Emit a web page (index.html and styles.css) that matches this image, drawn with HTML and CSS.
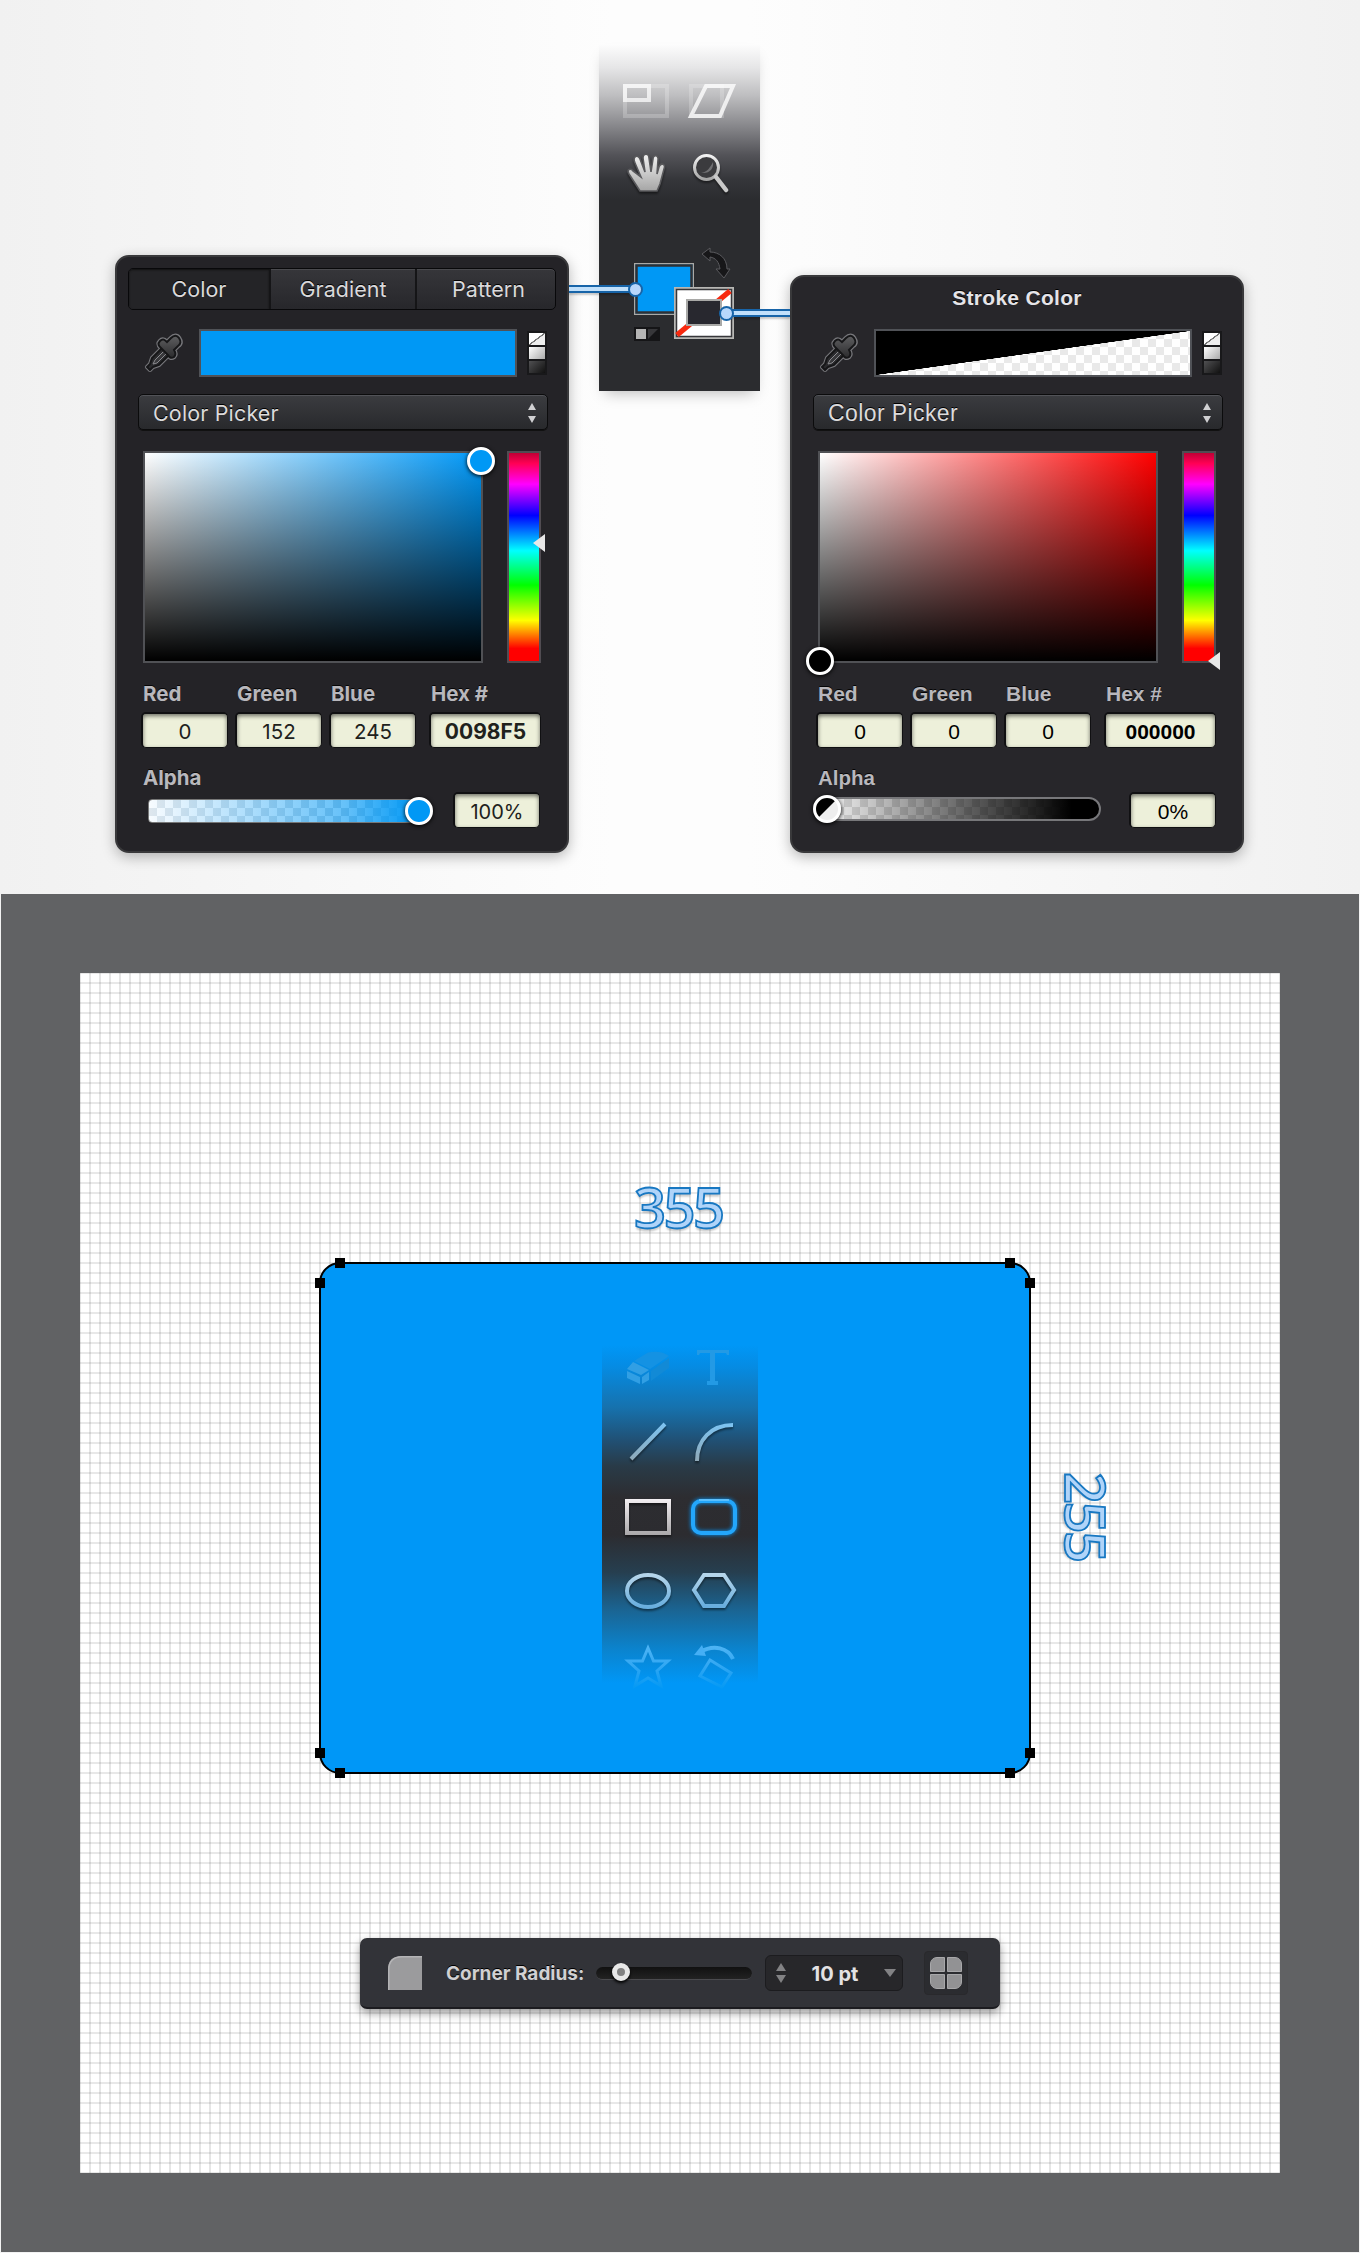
FILE: index.html
```html
<!DOCTYPE html>
<html lang="en">
<head>
<meta charset="utf-8">
<title>Rounded Rectangle Tool</title>
<link rel="stylesheet" href="styles.css">
</head>
<body>
<svg class="defs" width="0" height="0" aria-hidden="true">
  <defs>
    <linearGradient id="silver" x1="0" y1="0" x2="0" y2="1"><stop offset="0" stop-color="#f2f2f2"/><stop offset="1" stop-color="#a5a5a5"/></linearGradient>
    <linearGradient id="dropper" x1="0" y1="0" x2="0" y2="1"><stop offset="0" stop-color="#5f5f61"/><stop offset="1" stop-color="#2b2b2d"/></linearGradient>
    <symbol id="eyedropper" viewBox="0 0 40 40">
      <g fill="none" stroke="#77777b" stroke-linejoin="round" stroke-linecap="round">
        <path d="M21 14 9 26 7 32 4 35 7 38 10 35 16 33 28 21" stroke-width="4"/>
        <path d="M17 9c3-3 5-1 7 1l4-4c3-3 6-3 8 0s2 6-1 8l-4 4c2 3 2 5 0 7-3 2-5 0-6-2l-7-7c-2-2-4-4-1-7z" stroke-width="4.500"/>
      </g>
      <path d="M21 14 9 26 7 32 4 35 7 38 10 35 16 33 28 21z" fill="#2a2a2d" stroke="#161618" stroke-width="2"/>
      <path d="M22 18 12 28 10 32 14 31 24 21" fill="#39393c" stroke="#8a8a8e" stroke-width="1"/>
      <path d="M17 9c3-3 5-1 7 1l4-4c3-3 6-3 8 0s2 6-1 8l-4 4c2 3 2 5 0 7-3 2-5 0-6-2l-7-7c-2-2-4-4-1-7z" fill="url(#dropper)" stroke="#161618" stroke-width="2"/>
    </symbol>
  </defs>
</svg>

<section class="stage">
  <article class="panel fill-panel">
    <nav class="tabs"><span class="tab active">Color</span><span class="tab">Gradient</span><span class="tab">Pattern</span></nav>
    <div class="swatch-row">
      <svg class="eyedropper"><use href="#eyedropper"/></svg>
      <div class="swatch blue"></div>
      <div class="mini"><i class="none"></i><i class="light"></i><i class="dark"></i></div>
    </div>
    <div class="select">Color Picker <svg width="8" height="20" viewBox="0 0 8 20"><path d="M0 7 4 0 8 7zM0 13 4 20 8 13z" fill="#d0d0d2"/></svg></div>
    <div class="picker-row">
      <div class="field-map blue-map"><span class="knob map-knob"></span></div>
      <div class="hue"><svg class="pointer" width="12" height="18" viewBox="0 0 12 18"><path d="M0 9 12 0V18z" fill="#e8e8e8"/></svg></div>
    </div>
    <div class="values">
      <label>Red<span class="value">0</span></label>
      <label>Green<span class="value">152</span></label>
      <label>Blue<span class="value">245</span></label>
      <label class="hex">Hex #<span class="value">0098F5</span></label>
    </div>
    <div class="alpha-label">Alpha</div>
    <div class="alpha-row">
      <div class="alpha blue-alpha"><span class="knob alpha-knob"></span></div>
      <span class="value percent">100%</span>
    </div>
  </article>

  <div class="toolbar">
    <svg width="161" height="347" viewBox="0 0 161 347">
      <g fill="none" stroke="#fff" stroke-width="4">
        <rect x="26" y="42" width="42" height="30" opacity=".22"/>
        <rect x="26" y="42" width="24" height="14" opacity=".72"/>
        <rect x="92" y="42" width="31" height="30" opacity=".2"/>
        <path d="M107 42H134L121 72H92z" opacity=".78"/>
      </g>
      <g class="shadowed">
        <path d="M41 147 30 130C27 125 32 124 34 127L42 133 36 119C33 112 39 110 41 115L46 128 44 114C44 109 50 109 50 114L52 128 54 115C54 110 60 111 59 116L58 130 60 123C62 118 67 120 65 125L61 140 58 147z" fill="url(#silver)" stroke="#59595c" stroke-width="1.600"/>
        <circle cx="107.500" cy="123.500" r="12" fill="#3b3b3e" stroke="url(#silver)" stroke-width="3"/>
        <path d="M102 129C111 130 115 124 114 118C111 124 108 128 102 129z" fill="#707073"/>
        <path d="M117 133 127 146" stroke="#c9c9c9" stroke-width="4.500" stroke-linecap="round"/>
      </g>
      <path d="M103 210 111 204V208C120 208 128 214 128 225H131L125 234 117 225H121C120 218 117 214 111 213V217z" fill="#171719" stroke="#5a5a5e" stroke-width="1"/>
      <rect x="35.750" y="219.750" width="58.500" height="50.500" fill="#0098f5" stroke="#aaa9a6" stroke-width="1.500"/>
      <rect x="37.500" y="221.500" width="55" height="47" fill="none" stroke="#303033" stroke-width="2.500"/>
      <rect x="76" y="244" width="58" height="50" fill="#fff" stroke="#b7b7b4" stroke-width="2"/>
      <rect x="77.500" y="245.500" width="55" height="47" fill="none" stroke="#37373a" stroke-width="1.500"/>
      <path d="M78 291 131 247" stroke="#f7290f" stroke-width="5.500"/>
      <rect x="88" y="256" width="34" height="25" fill="#28282f" stroke="#a9a9a7" stroke-width="2"/>
      <rect x="35" y="283" width="26" height="14" fill="#151517"/><rect x="37" y="285" width="10" height="10" fill="#b4b4b4"/><path d="M49 295V285H59z" fill="#37373a"/>
    </svg>
  </div>

  <article class="panel stroke-panel">
    <h2>Stroke Color</h2>
    <div class="swatch-row">
      <svg class="eyedropper"><use href="#eyedropper"/></svg>
      <div class="swatch black"></div>
      <div class="mini"><i class="none"></i><i class="light"></i><i class="dark"></i></div>
    </div>
    <div class="select">Color Picker <svg width="8" height="20" viewBox="0 0 8 20"><path d="M0 7 4 0 8 7zM0 13 4 20 8 13z" fill="#d0d0d2"/></svg></div>
    <div class="picker-row">
      <div class="field-map red-map"><span class="knob map-knob"></span></div>
      <div class="hue"><svg class="pointer" width="12" height="18" viewBox="0 0 12 18"><path d="M0 9 12 0V18z" fill="#e8e8e8"/></svg></div>
    </div>
    <div class="values">
      <label>Red<span class="value">0</span></label>
      <label>Green<span class="value">0</span></label>
      <label>Blue<span class="value">0</span></label>
      <label class="hex">Hex #<span class="value">000000</span></label>
    </div>
    <div class="alpha-label">Alpha</div>
    <div class="alpha-row">
      <div class="alpha black-alpha"><span class="knob alpha-knob"></span></div>
      <span class="value percent">0%</span>
    </div>
  </article>
  <span class="wire wire-left"></span>
  <span class="wire wire-right"></span>
</section>

<section class="workspace">
  <div class="canvas">
    <div class="measure width">355</div>
    <div class="measure height">255</div>
    <div class="shape">
      <b class="h h1"></b><b class="h h2"></b><b class="h h3"></b><b class="h h4"></b>
      <b class="h h5"></b><b class="h h6"></b><b class="h h7"></b><b class="h h8"></b>
      <div class="tools">
        <svg width="156" height="345" viewBox="602 1345 156 345">
          <defs>
            <linearGradient id="fadeup" gradientUnits="userSpaceOnUse" x1="0" y1="1422" x2="0" y2="1460"><stop offset="0" stop-color="#7cc5f5"/><stop offset="1" stop-color="#8fa9b8"/></linearGradient>
            <linearGradient id="fadedown" x1="0" y1="0" x2="0" y2="1"><stop offset="0" stop-color="#b5d5ea"/><stop offset="1" stop-color="#68aede"/></linearGradient>
            <linearGradient id="rim" gradientUnits="userSpaceOnUse" x1="0" y1="1499" x2="0" y2="1535"><stop offset="0" stop-color="#f3eff2"/><stop offset="1" stop-color="#aaa8aa"/></linearGradient>
            <linearGradient id="star" gradientUnits="userSpaceOnUse" x1="0" y1="1643" x2="0" y2="1690"><stop offset="0" stop-color="#53b6f5"/><stop offset=".5" stop-color="#30a7f3"/><stop offset="1" stop-color="#0098f5"/></linearGradient>
          </defs>
          <path d="M634 1361 648 1352.500Q661 1350 669 1356L650 1369z" fill="#1492e3"/>
          <path d="M651 1371 669 1358V1368L651 1381z" fill="#128ad6"/>
          <path d="M627 1369 633 1362 649 1370 641 1375zM627 1371 640 1377V1384L627 1378zM642 1377 649 1372V1380L642 1384z" fill="#319fe4"/>
          <path d="M697 1350H729V1355H727L726 1353H715V1381H718V1385H707V1381H710V1353H700L699 1355H697z" fill="#239ae5"/>
          <g class="shadowed" fill="none" stroke-width="4">
            <path d="M631 1459 665 1424M697 1461C697 1440 711 1425 733 1425" stroke="url(#fadeup)"/>
            <rect x="627" y="1501" width="42" height="32" stroke="url(#rim)"/>
            <ellipse cx="648" cy="1591" rx="21" ry="16" stroke="url(#fadedown)"/>
            <path d="M704 1575H724L734 1590 724 1606H704L694 1590z" stroke="url(#fadedown)"/>
          </g>
          <rect class="glow" x="693" y="1501" width="42" height="32" rx="8" fill="none" stroke="#23a6fb" stroke-width="4"/>
          <path d="M699 1500H729" stroke="#6fc9ff" stroke-width="1.500"/>
          <g fill="none" stroke="url(#star)" stroke-width="3">
            <path d="M648 1648 653.500 1661H668L657 1671 661 1686 648 1678 635 1686 639 1671 628 1661H642.500z"/>
            <path d="M710 1660 731 1673 722 1687 700 1676z"/><path d="M700 1652C714 1644 728 1648 733 1659" stroke-width="4"/>
          </g>
          <path d="M694 1655 702 1645 706 1656z" fill="#45aff5"/>
        </svg>
      </div>
    </div>
    <div class="radius-bar">
      <svg class="corner" width="34" height="34" viewBox="0 0 34 34"><path d="M0 34V14Q0 0 14 0H34V34z" fill="#9b9b9d"/><path d="M.75 34V14Q.75 .75 14 .75H34" fill="none" stroke="#b4b4b6" stroke-width="1.500"/></svg>
      <span class="radius-label">Corner Radius:</span>
      <div class="track"><i></i></div>
      <div class="stepper">
        <svg width="10" height="20" viewBox="0 0 10 20"><path d="M0 8 5 0 10 8zM0 12 5 20 10 12z" fill="#828284"/></svg>
        <span>10 pt</span>
        <svg width="12" height="8" viewBox="0 0 12 8"><path d="M0 0H12L6 8z" fill="#828284"/></svg>
      </div>
      <div class="corners"><i></i><i></i><i></i><i></i></div>
    </div>
  </div>
</section>
</body>
</html>
```
FILE: styles.css
```css
*, *::after { box-sizing: border-box; }
body { margin: 0; width: 1360px; background: #f2f2f2; font-family: Inter, "Liberation Sans", sans-serif; }
.defs { position: absolute; }
svg { display: block; flex: none; }

.stage { position: relative; height: 894px; padding: 44px 116px 0 115px; display: flex; justify-content: space-between; align-items: flex-start; background: linear-gradient(90deg, #f1f1f1, #fdfdfd 45%, #fdfdfd 55%, #f1f1f1); }

.panel { width: 454px; padding: 11px 25px 0 26px; background: #242327; border: 2px solid #39393b; border-radius: 14px; box-shadow: 0 4px 14px rgba(0,0,0,.28); color: #b9b8bd; font-size: 20px; }
.fill-panel { height: 598px; margin-top: 211px; }
.stroke-panel { height: 578px; margin-top: 231px; padding: 0 26px; background: #27262a; font-family: "Liberation Sans", Arial, sans-serif; }
.stroke-panel h2 { margin: 0; height: 52px; padding-top: 9px; line-height: 24px; font-size: 21px; color: #e5e4e8; text-align: center; letter-spacing: .3px; text-shadow: 0 -1px #000; }
.tabs { display: flex; width: 428px; height: 42px; margin-left: -15px; border: 1px solid #08080a; border-radius: 5px; background: linear-gradient(#36363a, #27272b); box-shadow: inset 0 1px #4a4a4e; }
.tab { flex: 1; display: flex; align-items: center; justify-content: center; color: #dad9db; font-size: 21.500px; text-shadow: 0 -1px #000; border-left: 2px solid #151517; }
.tab.active { flex: none; width: 140px; border: 0; background: #242427; border-radius: 4px 0 0 4px; box-shadow: inset 0 1px 2px #111; }
.tab:last-child { flex: none; width: 140px; padding-left: 5px; }

.swatch-row { display: flex; align-items: flex-start; height: 65px; padding-left: 1px; }
.fill-panel .swatch-row { margin-top: 19px; }
.eyedropper { width: 40px; height: 40px; margin: 3px 0 0 -1px; }
.swatch { flex: none; width: 318px; height: 48px; margin-left: 16px; border: 2px solid #505257; }
.blue { background: #0098f5; }
.black { background: linear-gradient(to bottom right, #000 49.8%, transparent 50.2%), repeating-conic-gradient(#e9e9e9 0 25%, #fff 0 50%) 0 0 / 16px 16px; }
.mini { flex: none; width: 20px; height: 44px; margin: 2px 0 0 10px; padding: 2px; background: #18181a; display: flex; flex-direction: column; gap: 2px; }
.mini i { display: block; height: 12px; }
.mini .none { background: linear-gradient(to bottom right, #fff 46%, #777 47% 53%, #eee 54%); }
.mini .light { background: linear-gradient(135deg, #fff, #aaa); }
.mini .dark { background: linear-gradient(135deg, #505052, #111); }
.select { display: flex; align-items: center; justify-content: space-between; width: 410px; height: 36px; margin-left: -5px; padding: 2px 11px 0 14px; border: 1px solid #0b0b0c; border-radius: 5px; background: linear-gradient(#3b3c40, #28292c); box-shadow: inset 0 1px #515257, 0 1px #111; color: #dcdbdc; text-shadow: 0 -1px #000; font-size: 23px; letter-spacing: .4px; }
.fill-panel .select { font-size: 21.500px; letter-spacing: .15px; }
.picker-row { display: flex; gap: 24px; height: 212px; margin-top: 21px; }
.field-map { position: relative; width: 340px; height: 212px; border: 2px solid #505155; }
.blue-map { background: linear-gradient(transparent, #000), linear-gradient(90deg, #fff, #0098f8); }
.red-map { background: linear-gradient(transparent, #000), linear-gradient(90deg, #fff, #f00); }
.knob { position: absolute; width: 28px; height: 28px; border: 3px solid #fff; border-radius: 50%; box-shadow: 0 1px 4px #000; }
.blue-map .map-knob { right: -14px; top: -6px; background: #0098f5; }
.red-map .map-knob { left: -14px; bottom: -14px; background: #000; }
.hue { position: relative; width: 34px; border: 2px solid #514c52; background: linear-gradient(#c00035, #ff0055 5%, #f0f 15%, #00f 30%, #0ff 47%, #0f0 63.500%, #ff0 80.500%, red 94%); }
.pointer { position: absolute; right: -6px; top: 81px; }
.stroke-panel .pointer { top: 199px; }
.values { display: flex; height: 85px; gap: 7px; margin: 0 -2px; }
.values label { width: 87px; padding: 19px 0 0 2px; line-height: 24px; font-size: 20.500px; font-weight: 700; color: #b8b7bc; text-shadow: 0 -1px #050506; }
.stroke-panel .values label { font-size: 21px; }
.values .hex { width: 112px; margin-left: 6px; }
.value { display: block; height: 36px; margin: 6px 0 0 -2px; line-height: 36px; text-align: center; font-size: 20.500px; font-weight: 400; color: #20211c; text-shadow: none; background: #edf0da; border: solid #101012; border-width: 2px 1px 1px 2px; border-radius: 5px; box-shadow: inset 0 2px 4px rgba(0,0,0,.55); }
.hex .value { font-weight: 700; font-size: 21px; }
.stroke-panel .value { color: #000; font-size: 21px; }
.alpha-label { height: 45px; padding-top: 18px; line-height: 24px; font-size: 20.500px; font-weight: 700; text-shadow: 0 -1px #050506; }
.alpha-row { display: flex; height: 36px; }
.alpha { position: relative; flex: none; width: 282px; height: 24px; margin: 6px 0 0 5px; border: 1px solid #777; border-radius: 4px 12px 12px 4px; }
.blue-alpha { background: linear-gradient(90deg, rgba(240,248,255,.5), rgba(0,152,245,.6) 70%, #0098f5 96%), repeating-conic-gradient(#ccd5dc 0 25%, #fff 0 50%) 0 0 / 16px 16px; }
.black-alpha { margin: 4px 0 0; width: 283px; border: 2px solid #77777a; border-radius: 12px; background: linear-gradient(90deg, #0000, #0000001c 12%, #0000009c 54%, #000d 78%, #000 90%), repeating-conic-gradient(#d6d6d6 0 25%, #f2f2f2 0 50%) 0 0 / 16px 16px; }
.blue-alpha .alpha-knob { right: -4px; top: -3px; background: #0098f5; }
.black-alpha .alpha-knob { left: -7px; top: -4px; background: linear-gradient(135deg, #000 49%, #eee 51%); }
.percent { flex: none; width: 87px; margin: -1px 0 0 23px; font-size: 20px; }
.stroke-panel .percent { margin-left: 28px; }

.toolbar { width: 161px; height: 347px; background: linear-gradient(#fdfdfd 0, #e5e5e6 7%, #bdbdbf 15%, #858589 24%, #535358 32%, #35363a 39%, #2b2c2f 45%); box-shadow: 0 8px 14px -6px #0004; }
.shadowed { filter: drop-shadow(0 2px 1px #0007); }
.wire { position: absolute; height: 8px; border: solid #1764a8; border-width: 2px 0; background: #c1e0fb; box-shadow: 0 2px 2px #0003; }
.wire::after { content: ""; position: absolute; top: -5.500px; width: 15px; height: 15px; border: 2px solid #1764a8; border-radius: 50%; background: #b8d7fb; }
.wire-left { left: 569px; top: 285px; width: 61px; }
.wire-left::after { right: -13px; }
.wire-right { left: 732px; top: 309px; width: 58px; }
.wire-right::after { left: -13.500px; }

.workspace { height: 1358px; margin: 0 1px; padding: 79px 79px 0; background: #616264; }
.canvas { position: relative; width: 1200px; height: 1200px; background: repeating-linear-gradient(90deg, rgba(0,0,0,.1) 0 1px, transparent 1px 9px, rgba(0,0,0,.1) 9px 10px), repeating-linear-gradient(rgba(0,0,0,.09) 0 1px, transparent 1px 9px, rgba(0,0,0,.09) 9px 10px), #fff; }
.measure { position: absolute; font: 600 56px/60px "Open Sans", sans-serif; letter-spacing: -2.500px; color: #b0d4f9; -webkit-text-stroke: 1.800px #1878c2; text-shadow: 0 3px 2px #0003; }
.measure.width { left: 554px; top: 203px; }
.measure.height { left: 977px; top: 499px; writing-mode: vertical-rl; }
.shape { position: absolute; left: 239px; top: 289px; width: 712px; height: 512px; border: 2px solid #000; border-radius: 21px; background: #0097f7; display: flex; justify-content: center; padding-top: 81px; }
.h { position: absolute; width: 10px; height: 10px; background: #000; }
.h1 { left: 14px; top: -6px; } .h2 { left: -6px; top: 14px; }
.h3 { right: 14px; top: -6px; } .h4 { right: -6px; top: 14px; }
.h5 { left: 14px; bottom: -6px; } .h6 { left: -6px; bottom: 14px; }
.h7 { right: 14px; bottom: -6px; } .h8 { right: -6px; bottom: 14px; }
.tools { width: 156px; height: 345px; margin-left: 10px; background: linear-gradient(#0097f7 0, #058ce4 6%, #1672ae 18%, #214f72 28%, #293b48 35%, #2d2d31 44%, #2c2c30 55%, #263f50 66%, #1a6594 77%, #0b83cd 88%, #0097f7 98%); }
.glow { filter: drop-shadow(0 0 2px #0098ff); }
.radius-bar { position: absolute; left: 280px; top: 965px; width: 640px; height: 71px; padding: 0 32px 0 28px; display: flex; align-items: center; background: #323338; border-radius: 7px; border-bottom: 2px solid #1c1c20; box-shadow: 0 4px 10px #0006; }
.radius-label { width: 150px; margin-left: 24px; padding-top: 1px; font-size: 19px; font-weight: 700; color: #d1d0d2; white-space: nowrap; text-shadow: 0 -1px #000; }
.track { position: relative; width: 156px; height: 13px; margin-top: 2px; border-radius: 7px; background: linear-gradient(#111, #222); border-bottom: 1px solid #4b4b4f; }
.track i { position: absolute; left: 16px; top: -4px; width: 18px; height: 18px; border: 5px solid #e8e8e8; border-radius: 50%; background: #818181; box-shadow: 0 2px 3px #000; }
.stepper { width: 138px; height: 36px; margin-left: 13px; padding: 0 6px 0 10px; display: flex; align-items: center; justify-content: space-between; color: #e3e2e3; font-size: 20px; font-weight: 700; background: #27272a; border: 1px solid #1c1c1f; border-radius: 6px; }
.stepper span { padding-top: 2px; }
.corners { width: 44px; height: 44px; margin-left: 21px; padding: 5px; border: 1px solid #29292c; border-radius: 4px; background: #2b2c30; display: grid; grid-template-columns: 15px 15px; grid-template-rows: 15px 15px; gap: 2px; }
.corners i { background: #929294; border: 1px solid #a8a8aa; }
.corners i:nth-child(1) { border-radius: 7px 0 0; } .corners i:nth-child(2) { border-radius: 0 7px 0 0; } .corners i:nth-child(3) { border-radius: 0 0 0 7px; } .corners i:nth-child(4) { border-radius: 0 0 7px; }
```
